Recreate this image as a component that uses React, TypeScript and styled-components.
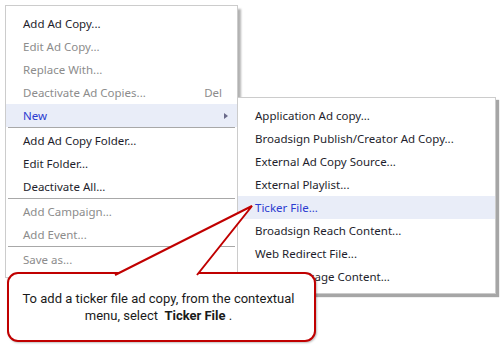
import styled, { createGlobalStyle } from "styled-components";

const GlobalStyle = createGlobalStyle`
  html, body {
    margin: 0;
    background: #ffffff;
  }
`;

const Page = styled.div`
  position: relative;
  width: 503px;
  height: 351px;
  padding: 5px;
  box-sizing: border-box;
  overflow: hidden;
  font-family: "Noto Sans", "Open Sans", sans-serif;
  font-size: 11.5px;
`;

const Menu = styled.div`
  width: 233px;
  box-sizing: border-box;
  background: #ffffff;
  border: 1px solid #cccccc;
  padding: 6px 0 6px;
  box-shadow: 3px 4px 2px rgba(0, 0, 0, 0.3);
`;

const SubMenu = styled(Menu)`
  position: absolute;
  left: 237px;
  top: 97px;
  width: 259px;
  height: 197px;
  box-shadow: 3px 3px 1px rgba(0, 0, 0, 0.35);
`;

const Row = styled.div<{ $disabled?: boolean; $active?: boolean }>`
  display: flex;
  align-items: center;
  justify-content: space-between;
  height: 23px;
  padding: 0 15px 0 17px;
  color: ${(p) => (p.$active ? "#2b3bd0" : p.$disabled ? "#8c8c8c" : "#1e1e2c")};
  background: ${(p) => (p.$active ? "#e9edf8" : "transparent")};
  white-space: nowrap;
`;

const Shortcut = styled.span`
  color: #8c8c8c;
`;

const Arrow = styled.span`
  width: 0;
  height: 0;
  margin-right: -6px;
  border-top: 3.5px solid transparent;
  border-bottom: 3.5px solid transparent;
  border-left: 4px solid #6a6a8a;
`;

const Separator = styled.div`
  height: 1px;
  margin: 0 2px 1px;
  background: #a8a8a8;
`;

const Callout = styled.div`
  position: absolute;
  left: 7px;
  top: 272px;
  width: 309px;
  height: 70px;
  box-sizing: border-box;
  border: 2px solid #c00000;
  border-radius: 11px;
  background: #ffffff;
  box-shadow: 1px 1px 2px rgba(0, 0, 0, 0.25);
  display: flex;
  flex-direction: column;
  align-items: center;
  justify-content: center;
  padding: 0 10px 0 4px;
  font-family: Roboto, "Liberation Sans", sans-serif;
  font-size: 13px;
  line-height: 17px;
  color: #1a1a1a;
  text-align: center;
  white-space: pre;
`;

const Tail = styled.svg`
  position: absolute;
  left: -2px;
  top: -72px;
  overflow: visible;
`;

type Item = { label: string; disabled?: boolean; active?: boolean; shortcut?: string; sub?: boolean } | "sep";

const mainItems: Item[] = [
  { label: "Add Ad Copy..." },
  { label: "Edit Ad Copy...", disabled: true },
  { label: "Replace With...", disabled: true },
  { label: "Deactivate Ad Copies...", disabled: true, shortcut: "Del" },
  { label: "New", active: true, sub: true },
  "sep",
  { label: "Add Ad Copy Folder..." },
  { label: "Edit Folder..." },
  { label: "Deactivate All..." },
  "sep",
  { label: "Add Campaign...", disabled: true },
  { label: "Add Event...", disabled: true },
  "sep",
  { label: "Save as...", disabled: true },
];

const subItems: Item[] = [
  { label: "Application Ad copy..." },
  { label: "Broadsign Publish/Creator Ad Copy..." },
  { label: "External Ad Copy Source..." },
  { label: "External Playlist..." },
  { label: "Ticker File...", active: true },
  { label: "Broadsign Reach Content..." },
  { label: "Web Redirect File..." },
  { label: "HTML Package Content..." },
];

const renderItems = (items: Item[]) =>
  items.map((item, i) =>
    item === "sep" ? (
      <Separator key={i} />
    ) : (
      <Row key={i} $disabled={item.disabled} $active={item.active}>
        <span>{item.label}</span>
        {item.shortcut && <Shortcut>{item.shortcut}</Shortcut>}
        {item.sub && <Arrow />}
      </Row>
    )
  );

export default function App() {
  return (
    <Page>
      <GlobalStyle />
      <Menu>{renderItems(mainItems)}</Menu>
      <SubMenu>{renderItems(subItems)}</SubMenu>
      <Callout>
        <Tail width="260" height="76">
          <polygon points="108,76 108,73 245,4 190,73 190,76" fill="#ffffff" />
          <polyline points="108,73 245,4 190,73" fill="none" stroke="#c00000" strokeWidth="2" />
        </Tail>
        <span>To add a ticker file ad copy, from the contextual</span>
        <span>
          menu, select  <b>Ticker File</b> .
        </span>
      </Callout>
    </Page>
  );
}
